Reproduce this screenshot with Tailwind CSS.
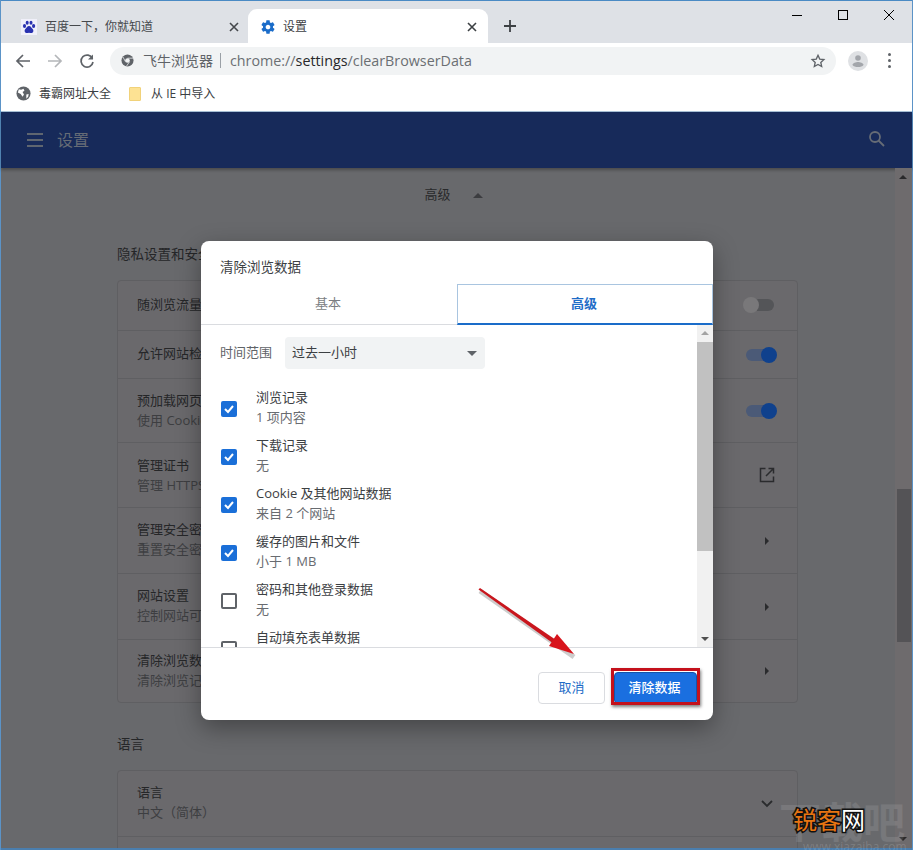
<!DOCTYPE html>
<html lang="zh-CN">
<head>
<meta charset="UTF-8">
<title>设置</title>
<script src="https://cdn.jsdelivr.net/npm/@tailwindcss/browser@4"></script>
</head>
<body class="relative w-[913px] h-[850px] overflow-hidden bg-[#68696c] text-[13px] text-[#3c4043] font-['Open_Sans','Noto_Sans_CJK_SC',sans-serif]">
  <div class="flex flex-col h-full border-x border-[#5b93c7]">
    <!-- tab strip -->
    <div class="h-[43px] shrink-0 flex items-end pl-[4px] bg-[#dee1e6] border-t border-[#4a8ac4] relative">
      <div class="w-[243px] h-[34px] flex items-center pl-[16px] pr-[9px] pt-[1px]">
        <svg class="w-4 h-4 shrink-0" viewBox="0 0 16 16"><rect width="16" height="16" fill="#f0f0fa"/><g fill="#2932b0"><ellipse cx="3.500" cy="7" rx="1.600" ry="2"/><ellipse cx="6.200" cy="3.800" rx="1.500" ry="2"/><ellipse cx="10" cy="3.800" rx="1.500" ry="2"/><ellipse cx="12.600" cy="7" rx="1.600" ry="2"/><path d="M8 7c-2 0-2.400 2-3.600 3-1.400 1.200-.8 4 1.300 4 1 0 1.500-.3 2.300-.3s1.400.3 2.400.3c2.100 0 2.600-2.800 1.200-4C10.400 9 10 7 8 7z"/></g></svg>
        <span class="ml-[8px] text-[#45484c] text-[12px] whitespace-nowrap">百度一下，你就知道</span>
        <svg class="w-[10px] h-[10px] ml-auto shrink-0" viewBox="0 0 10 10" stroke="#45484c" stroke-width="1.600"><path d="M1 1l8 8M9 1l-8 8"/></svg>
      </div>
      <div class="w-[240px] h-[34px] flex items-center pl-[12px] pr-[10px] bg-white rounded-t-[9px] pt-[1px]">
        <svg class="w-4 h-4 shrink-0" viewBox="0 0 24 24" fill="#1a6cc9"><path d="M19.430 12.980c.04-.32.07-.64.07-.98s-.03-.66-.07-.98l2.110-1.650c.19-.15.240-.42.120-.64l-2-3.460c-.12-.22-.39-.3-.61-.22l-2.490 1c-.52-.4-1.080-.73-1.690-.98l-.38-2.650C14.460 2.180 14.250 2 14 2h-4c-.25 0-.46.18-.49.42l-.38 2.650c-.61.25-1.170.59-1.690.98l-2.490-1c-.23-.09-.49 0-.61.22l-2 3.460c-.13.22-.07.49.12.64l2.110 1.650c-.04.32-.07.65-.07.98s.03.66.07.98l-2.110 1.650c-.19.15-.24.42-.12.64l2 3.460c.12.22.39.3.61.22l2.490-1c.52.4 1.080.73 1.690.98l.38 2.650c.03.24.24.42.49.42h4c.25 0 .46-.18.49-.42l.38-2.650c.61-.25 1.170-.59 1.690-.98l2.490 1c.23.09.49 0 .61-.22l2-3.460c.12-.22.07-.49-.12-.64l-2.110-1.650zM12 15.500c-1.930 0-3.500-1.570-3.500-3.500s1.570-3.500 3.500-3.500 3.500 1.570 3.500 3.500-1.570 3.500-3.500 3.500z"/></svg>
        <span class="ml-[7px] text-[#3c4043] text-[12px]">设置</span>
        <svg class="w-[10px] h-[10px] ml-auto mr-[1px] shrink-0" viewBox="0 0 10 10" stroke="#3c4043" stroke-width="1.600"><path d="M1 1l8 8M9 1l-8 8"/></svg>
      </div>
      <svg class="w-[12px] h-[12px] ml-[16px] mb-[11px]" viewBox="0 0 12 12" stroke="#3c4043" stroke-width="1.800"><path d="M6 0v12M0 6h12"/></svg>
      <!-- window buttons -->
      <div class="absolute right-[18px] top-[9px] flex items-center gap-[36px]">
        <div class="w-[10px] h-px bg-black"></div>
        <div class="w-[10px] h-[10px] border border-black"></div>
        <svg class="w-[10px] h-[10px]" viewBox="0 0 10 10" stroke="#000" stroke-width="1"><path d="M0 0l10 10M10 0L0 10"/></svg>
      </div>
    </div>
    <!-- toolbar -->
    <div class="h-[34px] shrink-0 flex items-center bg-white pt-[1px]">
      <svg class="w-[16px] h-[16px] ml-[14px]" viewBox="0 0 16 16" fill="none" stroke="#5f6368" stroke-width="1.700"><path d="M15 8H2M8 2L2 8l6 6"/></svg>
      <svg class="w-[16px] h-[16px] ml-[16px]" viewBox="0 0 16 16" fill="none" stroke="#b4b6b9" stroke-width="1.700"><path d="M1 8h13M8 2l6 6-6 6"/></svg>
      <svg class="w-[16px] h-[16px] ml-[16px]" viewBox="0 0 16 16" fill="none" stroke="#5f6368" stroke-width="1.700"><path d="M13.500 5.500A6 6 0 1 0 14 9"/><path d="M14 1.500V6.500H9" fill="#5f6368" stroke="none"/></svg>
      <div class="w-[726px] h-[28px] ml-[15px] flex items-center rounded-full bg-[#f1f3f4] pl-[11px] pr-[10px]">
        <svg class="w-[13px] h-[13px] shrink-0" viewBox="0 0 14 14"><circle cx="7" cy="7" r="6.500" fill="#5f6368"/><circle cx="7" cy="7" r="2.500" fill="#f1f3f4"/><path d="M7 4.500h6M4.800 8.300L2 3M9.200 8.300L6 13" stroke="#f1f3f4" stroke-width=".8"/></svg>
        <span class="ml-[9px] text-[14px] text-[#5f6368]">飞牛浏览器</span>
        <span class="w-px h-[15px] ml-[7px] bg-[#9aa0a6]"></span>
        <span class="ml-[9px] text-[14.300px] text-[#6b6f73] whitespace-nowrap">chrome://<span class="text-[#28292b]">settings</span>/clearBrowserData</span>
        <svg class="w-[16px] h-[16px] ml-auto" viewBox="0 0 24 24" fill="none" stroke="#5f6368" stroke-width="2"><path d="M12 3.500l2.600 5.700 6.200.7-4.600 4.200 1.300 6.100L12 17.100l-5.500 3.100 1.300-6.100L3.200 9.900l6.200-.7z"/></svg>
      </div>
      <div class="w-[20px] h-[20px] ml-[12px] rounded-full bg-[#dfe1e4] flex items-center justify-center">
        <svg class="w-[16px] h-[16px]" viewBox="0 0 16 16" fill="#a3a6ab"><circle cx="8" cy="5" r="2.800"/><path d="M2.500 12c0-2 3.500-3 5.500-3s5.500 1 5.500 3c-1 1.500-3 2-5.500 2s-4.500-.5-5.500-2z"/></svg>
      </div>
      <div class="ml-[20px] flex flex-col gap-[3px]">
        <span class="w-[3px] h-[3px] rounded-full bg-[#5f6368]"></span>
        <span class="w-[3px] h-[3px] rounded-full bg-[#5f6368]"></span>
        <span class="w-[3px] h-[3px] rounded-full bg-[#5f6368]"></span>
      </div>
    </div>
    <!-- bookmarks -->
    <div class="h-[35px] shrink-0 flex items-center bg-white border-b border-[#a9c2d8] pl-[15px] text-[12px] text-[#3c4043]">
      <svg class="w-[15px] h-[15px] mb-[2px]" viewBox="0 0 16 16"><circle cx="8" cy="8" r="7.500" fill="#5f6368"/><path d="M3 3.500l2.500.5L8 3l1 2-2 1.500L8.500 9l-1.500 2.500L5 8.500 2 7zM11 9l2.500-.5-.5 3-2 2z" fill="#fff"/></svg>
      <span class="ml-[8px]">毒霸网址大全</span>
      <div class="w-[12px] h-[14px] ml-[18px] bg-[#fde293] border border-[#f1d27a] rounded-[1px]"></div>
      <span class="ml-[10px]">从 IE 中导入</span>
    </div>
    <!-- settings header -->
    <div class="h-[56px] shrink-0 flex items-center bg-[#172a5a] pl-[26px] pr-[26px] shadow-[0_2px_3px_rgba(0,0,0,0.3)] relative">
      <div class="flex flex-col gap-[4px]">
        <span class="w-[16px] h-[2px] bg-[#5f6670]"></span>
        <span class="w-[16px] h-[2px] bg-[#5f6670]"></span>
        <span class="w-[16px] h-[2px] bg-[#5f6670]"></span>
      </div>
      <span class="ml-[14px] text-[16px] text-[#666c76]">设置</span>
      <svg class="w-[18px] h-[18px] ml-auto mb-[3px]" viewBox="0 0 18 18" fill="none" stroke="#666c76" stroke-width="1.800"><circle cx="7" cy="7" r="5"/><path d="M10.500 10.500L16 16"/></svg>
    </div>
    <!-- page under the dialog -->
    <div class="flex-1 flex min-h-0 overflow-hidden">
      <div class="flex-1 pl-[116px] pr-[97px] min-w-0">
        <div class="h-[54px] flex items-center justify-center gap-[22px] text-[#28292b] pr-[8px]">
          <span>高级</span>
          <span class="w-0 h-0 border-x-[5px] border-x-transparent border-b-[5px] border-b-[#3c3d40]"></span>
        </div>
        <h2 class="h-[58px] pt-[22px] text-[13.500px] text-[#252628]">隐私设置和安全性</h2>
        <div class="h-[423px] flex flex-col rounded-[4px] bg-[#6a696c] border border-[#5f5f62] text-[#252628]">
          <div class="h-[50px] shrink-0 flex items-center justify-between pl-[19px] pr-[23px] border-b border-[#5f5f62]">
            <span class="mb-[2px]">随浏览流量一起发送</span>
            <span class="relative w-[28px] h-[12px] rounded-full bg-[#545558] mb-[1px]"><span class="absolute left-[-3px] top-[-2px] w-[16px] h-[16px] rounded-full bg-[#79787a]"></span></span>
          </div>
          <div class="h-[48px] shrink-0 flex items-center justify-between pl-[19px] pr-[23px] border-b border-[#5f5f62]">
            <span class="mb-[2px]">允许网站检查您是否</span>
            <span class="relative w-[28px] h-[12px] rounded-full bg-[#4b5a77]"><span class="absolute right-[-3px] top-[-2px] w-[16px] h-[16px] rounded-full bg-[#0f418d]"></span></span>
          </div>
          <div class="h-[64px] shrink-0 flex items-center justify-between pl-[19px] pr-[23px] border-b border-[#5f5f62]">
            <div class="leading-[20px] mb-[2px]"><div>预加载网页</div><div class="text-[#3d3e41]">使用 Cookie</div></div>
            <span class="relative w-[28px] h-[12px] rounded-full bg-[#4b5a77]"><span class="absolute right-[-3px] top-[-2px] w-[16px] h-[16px] rounded-full bg-[#0f418d]"></span></span>
          </div>
          <div class="h-[65px] shrink-0 flex items-center justify-between pl-[19px] pr-[22px] border-b border-[#5f5f62]">
            <div class="leading-[20px] mb-[1px]"><div>管理证书</div><div class="text-[#3d3e41]">管理 HTTPS</div></div>
            <svg class="w-[16px] h-[16px]" viewBox="0 0 16 16" fill="none" stroke="#2a2b2d" stroke-width="1.500"><path d="M6.500 1.500h-5v13h13v-5M9.500 1.500h5v5M14.500 1.500L7 9"/></svg>
          </div>
          <div class="h-[66px] shrink-0 flex items-center justify-between pl-[19px] pr-[28px] border-b border-[#5f5f62]">
            <div class="leading-[20px] mb-[3px]"><div>管理安全密钥</div><div class="text-[#3d3e41]">重置安全密钥</div></div>
            <span class="w-0 h-0 border-y-[4px] border-y-transparent border-l-[4px] border-l-[#2a2b2d]"></span>
          </div>
          <div class="h-[66px] shrink-0 flex items-center justify-between pl-[19px] pr-[28px] border-b border-[#5f5f62]">
            <div class="leading-[20px] mb-[4px]"><div>网站设置</div><div class="text-[#3d3e41]">控制网站可以</div></div>
            <span class="w-0 h-0 border-y-[4px] border-y-transparent border-l-[4px] border-l-[#2a2b2d]"></span>
          </div>
          <div class="flex-1 flex items-center justify-between pl-[19px] pr-[28px]">
            <div class="leading-[20px] mb-[3px]"><div>清除浏览数据</div><div class="text-[#3d3e41]">清除浏览记录</div></div>
            <span class="w-0 h-0 border-y-[4px] border-y-transparent border-l-[4px] border-l-[#2a2b2d]"></span>
          </div>
        </div>
        <h2 class="h-[67px] pt-[31px] text-[13.500px] text-[#252628]">语言</h2>
        <div class="h-[120px] rounded-[4px] bg-[#6a696c] border border-[#5f5f62] text-[#252628]">
          <div class="h-[66px] flex items-center justify-between pl-[19px] pr-[24px] border-b border-[#5f5f62]">
            <div class="leading-[20px] mb-[4px]"><div>语言</div><div class="text-[#3d3e41]">中文（简体）</div></div>
            <svg class="w-[12px] h-[8px]" viewBox="0 0 12 8" fill="none" stroke="#2a2b2d" stroke-width="1.800"><path d="M1 1l5 5 5-5"/></svg>
          </div>
        </div>
      </div>
      <!-- page scrollbar -->
      <div class="w-[17px] shrink-0 relative bg-[#6e6b6d]">
        <span class="absolute top-[7px] left-[4px] w-0 h-0 border-x-[4px] border-x-transparent border-b-[4px] border-b-[#29292b]"></span>
        <div class="absolute top-[321px] h-[153px] left-[2px] right-[1px] bg-[#545356]"></div>
        <span class="absolute bottom-[7px] left-[4px] w-0 h-0 border-x-[4px] border-x-transparent border-t-[4px] border-t-[#29292b]"></span>
      </div>
    </div>
    <div class="h-[2px] shrink-0 bg-[#4a7eae]"></div>
  </div>

  <!-- dialog -->
  <div class="absolute left-[201px] top-[241px] w-[512px] h-[479px] flex flex-col rounded-[8px] bg-white shadow-[0_8px_24px_rgba(0,0,0,0.35)]">
    <h1 class="h-[43px] shrink-0 pl-[19px] pt-[15px] text-[13.500px] leading-[22px] text-[#3c4043]">清除浏览数据</h1>
    <div class="h-[41px] shrink-0 flex border-b border-[#dadce0]">
      <div class="w-[256px] flex items-center justify-center pr-[2px] text-[#7b7e82]">基本</div>
      <div class="w-[256px] mb-[-1px] flex items-center justify-center pr-[2px] font-bold text-[#1f6dc7] border-[1px] border-b-[2px] border-[#a9c5e0] border-b-[#1a6cc9]">高级</div>
    </div>
    <div class="flex-1 flex min-h-0 overflow-hidden">
      <div class="flex-1 pl-[19px] overflow-hidden">
        <div class="flex items-center mt-[12px] mb-[14px]">
          <span class="text-[#5f6368]">时间范围</span>
          <div class="w-[200px] h-[32px] ml-[13px] flex items-center justify-between pl-[7px] pr-[8px] rounded-[4px] bg-[#f1f3f4] text-[#3c4043]">
            <span>过去一小时</span>
            <span class="w-0 h-0 border-x-[5px] border-x-transparent border-t-[5px] border-t-[#5f6368]"></span>
          </div>
        </div>
        <div class="flex flex-col">
          <label class="h-[48px] shrink-0 flex items-center">
            <span class="w-[16px] h-[16px] ml-[1px] mt-[4px] flex items-center justify-center rounded-[2px] bg-[#1a6fd8]"><svg class="w-[12px] h-[12px]" viewBox="0 0 12 12" fill="none" stroke="#fff" stroke-width="2"><path d="M2 6l3 3 5-6"/></svg></span>
            <span class="ml-[19px] leading-[20px]"><span class="block text-[#3c4043]">浏览记录</span><span class="block text-[#686b70]">1 项内容</span></span>
          </label>
          <label class="h-[48px] shrink-0 flex items-center">
            <span class="w-[16px] h-[16px] ml-[1px] mt-[4px] flex items-center justify-center rounded-[2px] bg-[#1a6fd8]"><svg class="w-[12px] h-[12px]" viewBox="0 0 12 12" fill="none" stroke="#fff" stroke-width="2"><path d="M2 6l3 3 5-6"/></svg></span>
            <span class="ml-[19px] leading-[20px]"><span class="block text-[#3c4043]">下载记录</span><span class="block text-[#686b70]">无</span></span>
          </label>
          <label class="h-[48px] shrink-0 flex items-center">
            <span class="w-[16px] h-[16px] ml-[1px] mt-[4px] flex items-center justify-center rounded-[2px] bg-[#1a6fd8]"><svg class="w-[12px] h-[12px]" viewBox="0 0 12 12" fill="none" stroke="#fff" stroke-width="2"><path d="M2 6l3 3 5-6"/></svg></span>
            <span class="ml-[19px] leading-[20px]"><span class="block text-[#3c4043]">Cookie 及其他网站数据</span><span class="block text-[#686b70]">来自 2 个网站</span></span>
          </label>
          <label class="h-[48px] shrink-0 flex items-center">
            <span class="w-[16px] h-[16px] ml-[1px] mt-[4px] flex items-center justify-center rounded-[2px] bg-[#1a6fd8]"><svg class="w-[12px] h-[12px]" viewBox="0 0 12 12" fill="none" stroke="#fff" stroke-width="2"><path d="M2 6l3 3 5-6"/></svg></span>
            <span class="ml-[19px] leading-[20px]"><span class="block text-[#3c4043]">缓存的图片和文件</span><span class="block text-[#686b70]">小于 1 MB</span></span>
          </label>
          <label class="h-[48px] shrink-0 flex items-center">
            <span class="w-[16px] h-[16px] ml-[1px] mt-[4px] rounded-[2px] border-2 border-[#5f6368]"></span>
            <span class="ml-[19px] leading-[20px]"><span class="block text-[#3c4043]">密码和其他登录数据</span><span class="block text-[#686b70]">无</span></span>
          </label>
          <label class="h-[48px] shrink-0 flex items-center">
            <span class="w-[16px] h-[16px] ml-[1px] mt-[4px] rounded-[2px] border-2 border-[#5f6368]"></span>
            <span class="ml-[19px] leading-[20px]"><span class="block text-[#3c4043]">自动填充表单数据</span><span class="block text-[#686b70]">无</span></span>
          </label>
        </div>
      </div>
      <!-- dialog scrollbar -->
      <div class="w-[16px] shrink-0 flex flex-col items-center bg-[#f1f1f1]">
        <span class="mt-[6px] w-0 h-0 border-x-[4px] border-x-transparent border-b-[4px] border-b-[#a3a3a3]"></span>
        <div class="w-full h-[209px] mt-[7px] bg-[#c1c1c1]"></div>
        <span class="mt-auto mb-[6px] w-0 h-0 border-x-[4px] border-x-transparent border-t-[4px] border-t-[#505050]"></span>
      </div>
    </div>
    <div class="h-[73px] shrink-0 flex justify-end items-start pt-[24px] pr-[16px] gap-[9px] border-t border-[#dadce0]">
      <button class="w-[67px] h-[32px] rounded-[4px] border border-[#dadce0] text-[#1f6dc7]">取消</button>
      <button class="w-[83px] h-[32px] pr-[2px] rounded-[4px] bg-[#1a6fe0] border border-[#1553a8] text-white font-medium">清除数据</button>
    </div>
  </div>

  <!-- red highlight + arrow -->
  <div class="absolute left-[611px] top-[668px] w-[89px] h-[37px] border-[3px] border-[#c4111c] shadow-[1px_2px_3px_rgba(0,0,0,0.5)]"></div>
  <svg class="absolute left-[470px] top-[580px] w-[115px] h-[85px]" viewBox="0 0 115 85">
    <path d="M10 11L104 77" stroke="#000" stroke-opacity=".2" stroke-width="5"/>
    <path d="M8.500 9.500L10 8 86 60 84 64z" fill="#c9161d"/>
    <path d="M104 74L79 66l8-12z" fill="#d8141c"/>
  </svg>

  <!-- watermark -->
  <div class="absolute left-[779px] top-[792px] text-[42px] leading-[60px] font-bold text-white/10 whitespace-nowrap">下载吧</div>
  <div class="absolute left-[803px] top-[842px] text-[12px] leading-[10px] text-white/15">www.xiazaiba.com</div>
  <div class="absolute left-[793px] top-[805px] text-[24px] leading-[30px] font-normal text-[#e87511] whitespace-nowrap [-webkit-text-stroke:3px_#111] [paint-order:stroke_fill]">锐客<span class="text-white">网</span></div>
</body>
</html>
